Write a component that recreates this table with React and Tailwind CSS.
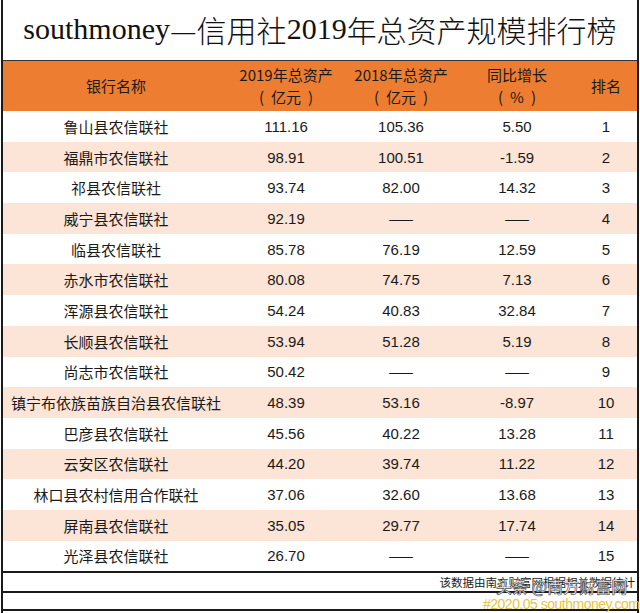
import React from "react";

const rows = [
  ["鲁山县农信联社", "111.16", "105.36", "5.50", "1"],
  ["福鼎市农信联社", "98.91", "100.51", "-1.59", "2"],
  ["祁县农信联社", "93.74", "82.00", "14.32", "3"],
  ["威宁县农信联社", "92.19", "——", "——", "4"],
  ["临县农信联社", "85.78", "76.19", "12.59", "5"],
  ["赤水市农信联社", "80.08", "74.75", "7.13", "6"],
  ["浑源县农信联社", "54.24", "40.83", "32.84", "7"],
  ["长顺县农信联社", "53.94", "51.28", "5.19", "8"],
  ["尚志市农信联社", "50.42", "——", "——", "9"],
  ["镇宁布依族苗族自治县农信联社", "48.39", "53.16", "-8.97", "10"],
  ["巴彦县农信联社", "45.56", "40.22", "13.28", "11"],
  ["云安区农信联社", "44.20", "39.74", "11.22", "12"],
  ["林口县农村信用合作联社", "37.06", "32.60", "13.68", "13"],
  ["屏南县农信联社", "35.05", "29.77", "17.74", "14"],
  ["光泽县农信联社", "26.70", "——", "——", "15"],
];

const cjk = { fontFamily: '"Noto Sans CJK SC", "Noto Sans", sans-serif' };
const num = { fontFamily: '"Liberation Sans", "Noto Sans CJK SC", sans-serif' };

function Cell({ v, name }) {
  const isDash = v === "——";
  return (
    <div
      className="flex items-center justify-center text-[15px] text-[#1a1a1a] leading-none whitespace-nowrap"
      style={name || isDash ? cjk : num}
    >
      {v}
    </div>
  );
}

function Paren({ children }) {
  return (
    <span className="flex items-center">
      <span>(</span>
      <span className="mx-[7px]">{children}</span>
      <span>)</span>
    </span>
  );
}

export default function App() {
  return (
    <div className="w-[640px] h-[613px] bg-white relative overflow-hidden">
      <div className="mx-[1px] h-[613px] border-x-2 border-[#1a1a1a] flex flex-col">
        <div
          className="h-[60px] flex items-center justify-center text-[30px] text-[#111] leading-none pb-[2px] whitespace-nowrap"
          style={{ fontFamily: '"Liberation Serif", "Noto Sans CJK SC", serif' }}
        >
          <span>southmoney</span>
          <span style={cjk} className="font-light">—信用社</span>
          <span>2019</span>
          <span style={cjk} className="font-light">年总资产规模排行榜</span>
        </div>
        <div className="h-[51px] border-t border-[#333] bg-[#ED7D31] grid grid-cols-[226px_114px_116px_116px_1fr] text-[15px] text-[#1a1a1a] leading-[22px]" style={cjk}>
          <div className="flex items-center justify-center">银行名称</div>
          <div className="flex flex-col items-center justify-center">
            <span>2019年总资产</span>
            <Paren>亿元</Paren>
          </div>
          <div className="flex flex-col items-center justify-center">
            <span>2018年总资产</span>
            <Paren>亿元</Paren>
          </div>
          <div className="flex flex-col items-center justify-center">
            <span>同比增长</span>
            <Paren>%</Paren>
          </div>
          <div className="flex items-center justify-center">排名</div>
        </div>
        {rows.map((r, i) => (
          <div
            key={i}
            className={`h-[30.7px] grid grid-cols-[226px_114px_116px_116px_1fr] ${i % 2 === 1 ? "bg-[#FCE4D6]" : "bg-white"}`}
          >
            <Cell v={r[0]} name />
            <Cell v={r[1]} />
            <Cell v={r[2]} />
            <Cell v={r[3]} />
            <Cell v={r[4]} />
          </div>
        ))}
        <div className="h-[20px] border-t-2 border-[#1a1a1a] flex items-center justify-end pr-[2px] text-[11.5px] text-[#1a1a1a] leading-none whitespace-nowrap" style={cjk}>
          该数据由南方财富网根据相关数据统计
        </div>
        <div className="h-[20px] border-y-2 border-[#1a1a1a]"></div>
      </div>
      <div
        className="absolute left-[496px] top-[578px] text-[16px] leading-none text-white font-medium whitespace-nowrap"
        style={{ ...cjk, WebkitTextStroke: "0.7px #555" }}
      >
        头条 @南方财富网
      </div>
      <div
        className="absolute left-[483px] top-[597px] text-[14px] leading-none tracking-[-0.5px] text-[#E9C43E] whitespace-nowrap"
        style={{ fontFamily: '"Liberation Sans", sans-serif' }}
      >
        #2020.05 southmoney.com
      </div>
    </div>
  );
}
